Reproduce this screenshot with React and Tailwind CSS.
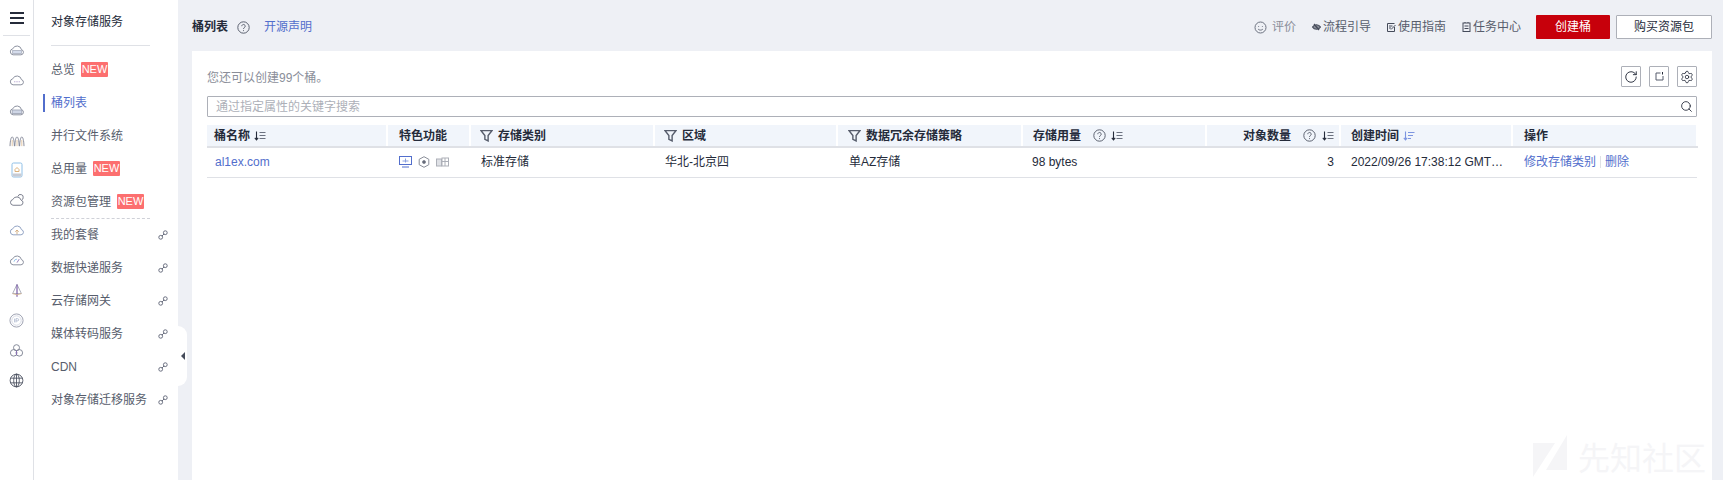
import { RotateCw, Settings, Search } from "lucide-react";

const Cloud = ({ children, stroke = "#7d8292" }) => (
  <svg width="16" height="14" viewBox="0 0 18 16" fill="none" stroke={stroke} strokeWidth="1">
    <path d="M4.5 13.5h9a3 3 0 0 0 .6-5.9A5.2 5.2 0 0 0 4.2 6.6 3.5 3.5 0 0 0 4.5 13.5z" />
    {children}
  </svg>
);

const railIcons = [
  <Cloud key="a"><rect x="4" y="8.5" width="10" height="3.5" fill="#d5dcec" stroke="#adb3c2" /></Cloud>,
  <Cloud key="b"><path d="M6 10h1M8.5 10h1M11 10h1" stroke="#8a6fb5" /></Cloud>,
  <Cloud key="c"><rect x="3.5" y="8" width="11" height="4" fill="#cfd6e6" stroke="#a0a6b6" /></Cloud>,
  <svg key="d" width="16" height="14" viewBox="0 0 18 16" fill="none" stroke="#7a7f90" strokeWidth="1">
    <path d="M1 15C1.5 1 5.5 1 6 15M6.5 15C7 1 11 1 11.5 15M12 15C12.5 1 16.5 1 17 15" />
    <path d="M3.5 15V8M9 15V8M14.5 15V8" stroke="#e0c09a" />
  </svg>,
  <svg key="e" width="12" height="16" viewBox="0 0 12 16" fill="none" strokeWidth="1">
    <rect x="1" y="1" width="10" height="14" rx="1.5" stroke="#8fc0e8" />
    <rect x="1.5" y="11.5" width="9" height="3" fill="#c8cbd4" />
    <path d="M4 7.5l2-2 2 2v2H4z" stroke="#dcb27c" />
  </svg>,
  <svg key="f" width="16" height="14" viewBox="0 0 18 16" fill="none" stroke="#6b7080" strokeWidth="1">
    <path d="M4.5 14h8.5a3 3 0 0 0 .6-5.9A5 5 0 0 0 4.2 7.5 3.3 3.3 0 0 0 4.5 14z" />
    <path d="M10 4a3 3 0 0 1 6 1.5 3 3 0 0 1-1.5 2.5" />
  </svg>,
  <Cloud key="g" stroke="#8497bb"><path d="M9 13V8M7 10l2-2 2 2" stroke="#d0a878" /></Cloud>,
  <Cloud key="h"><path d="M9 11l2.5-4" stroke="#8a6fb5" /><path d="M5.5 10a3.5 3.5 0 0 1 3.5-3" stroke="#8fc0e8" /></Cloud>,
  <svg key="i" width="14" height="15" viewBox="0 0 16 16" fill="none" stroke="#a0a4b2" strokeWidth="1">
    <path d="M8 1 3 11.5h10z" />
    <path d="M8 1v14" stroke="#7d5fa8" strokeWidth="1.4" />
    <path d="M3 11.5 8 13l5-1.5" stroke="#d8b690" />
  </svg>,
  <svg key="j" width="15" height="15" viewBox="0 0 16 16" fill="none" strokeWidth="1">
    <circle cx="8" cy="8" r="7" stroke="#9a9eae" />
    <circle cx="8" cy="8" r="5" stroke="#d4d8e2" />
    <path d="M6 6v4M7.5 10V6h1.6a1.2 1.2 0 0 1 0 2.4H7.5" stroke="#b4bed2" />
  </svg>,
  <svg key="k" width="15" height="15" viewBox="0 0 16 16" fill="none" stroke="#7d8292" strokeWidth="1">
    <circle cx="8" cy="5" r="3.2" />
    <circle cx="5" cy="10.5" r="3.5" />
    <circle cx="11" cy="10.5" r="3.5" />
    <path d="M8 8v5" stroke="#8a6fb5" />
  </svg>,
  <svg key="l" width="15" height="15" viewBox="0 0 16 16" fill="none" stroke="#454b5a" strokeWidth="0.9">
    <circle cx="8" cy="8" r="6.8" />
    <ellipse cx="8" cy="8" rx="3" ry="6.8" />
    <path d="M1.5 5.5h13M1.5 10.5h13M8 1v14" />
  </svg>,
];

const LinkIcon = () => (
  <svg width="10" height="10" viewBox="0 0 10 10" fill="none" stroke="#6b7080" strokeWidth="1">
    <circle cx="2.7" cy="7.3" r="1.9" />
    <circle cx="7.3" cy="2.7" r="1.9" />
    <path d="M4 6l2-2" />
  </svg>
);

const Help = ({ className = "" }) => (
  <svg width="13" height="13" viewBox="0 0 13 13" fill="none" stroke="#5c6270" strokeWidth="1" className={className}>
    <circle cx="6.5" cy="6.5" r="5.7" />
    <path d="M4.8 5.2a1.7 1.7 0 1 1 2.6 1.4c-.6.4-.9.7-.9 1.4" />
    <path d="M6.5 9.2v.9" />
  </svg>
);

const Filter = () => (
  <svg width="13" height="13" viewBox="0 0 12 12" fill="none" stroke="#575d6c" strokeWidth="1.3" className="mr-[5px] shrink-0">
    <path d="M1 1.5h10L7.5 6v5L4.5 9.5V6z" />
  </svg>
);

const Sort = ({ className = "" }) => (
  <svg width="12" height="10" viewBox="0 0 12 10" fill="none" strokeWidth="1.1" className={className}>
    <path d="M2.5 0.5v8M0.8 6.8l1.7 2 1.7-2" stroke="#252b3a" />
    <path d="M5.5 1.5h6M5.5 4.5h6M5.5 7.5h6" stroke="#6c7280" />
  </svg>
);

const SortActive = () => (
  <svg width="12" height="10" viewBox="0 0 12 10" fill="none" stroke="#7d95e0" strokeWidth="1.1" className="ml-[4px]">
    <path d="M2.5 0.5v8M0.8 6.8l1.7 2 1.7-2" />
    <path d="M5 1.5h6.5M5 4.5h5M5 7.5h3" />
  </svg>
);

const New = () => (
  <span className="ml-[6px] flex h-[15px] w-[27px] items-center justify-center rounded-[1px] bg-[#fc6f6f] text-[11px] leading-none text-white">NEW</span>
);

const SideItem = ({ label, isNew, link, active, dashed }) => (
  <div className="relative flex h-[33px] items-center pr-[10px]">
    {dashed && <div className="absolute left-[17px] top-0 w-[99px] border-t border-dashed border-[#cfd1d8]" />}
    {active ? (
      <span className="ml-[9px] h-[18px] border-l-2 border-[#526ecc] pl-[6px] leading-[18px] text-[#526ecc]">{label}</span>
    ) : (
      <span className="ml-[17px]">{label}</span>
    )}
    {isNew && <New />}
    {link && <span className="ml-auto flex"><LinkIcon /></span>}
  </div>
);

const TopLink = ({ icon, label, muted }) => (
  <div className={`flex items-center gap-[2px] ${muted ? "text-[#8a8e99]" : "text-[#575d6c]"}`}>
    {icon}
    <span>{label}</span>
  </div>
);

const Th = ({ children, className = "" }) => (
  <th className={`h-[22px] border-r-2 border-b-2 border-r-white border-b-[#dfe1e6] bg-[#f1f5fb] p-0 text-left font-bold text-[#252b3a] ${className}`}>
    <div className="flex items-center">{children}</div>
  </th>
);

const Td = ({ children, className = "" }) => (
  <td className={`h-[30px] border-b border-[#dfe1e6] p-0 text-[#252b3a] ${className}`}>{children}</td>
);

export default function App() {
  return (
    <div className="flex h-screen overflow-hidden bg-white font-['Liberation_Sans','Noto_Sans_CJK_SC',sans-serif] text-[12px] text-[#575d6c]">
      {/* icon rail */}
      <div className="flex w-[34px] shrink-0 flex-col border-r border-[#dfe1e6]">
        <div className="mx-[3px] flex h-[36px] items-center justify-center border-b border-[#dfe1e6]">
          <div className="flex w-[14px] flex-col gap-[3px]">
            <div className="h-[2px] bg-[#252b3a]" />
            <div className="h-[2px] bg-[#252b3a]" />
            <div className="h-[2px] bg-[#252b3a]" />
          </div>
        </div>
        <div className="-mt-px">
          {railIcons.map((icon, i) => (
            <div key={i} className="flex h-[30px] items-center justify-center">{icon}</div>
          ))}
        </div>
      </div>

      {/* service menu */}
      <div className="w-[144px] shrink-0">
        <div className="mx-[17px] mr-[28px] flex h-[46px] items-center border-b border-[#dfe1e6] pb-[1px] text-[#252b3a]">对象存储服务</div>
        <div className="mt-[7px]">
          <SideItem label="总览" isNew />
          <SideItem label="桶列表" active />
          <SideItem label="并行文件系统" />
          <SideItem label="总用量" isNew />
          <SideItem label="资源包管理" isNew />
          <SideItem label="我的套餐" link dashed />
          <SideItem label="数据快递服务" link />
          <SideItem label="云存储网关" link />
          <SideItem label="媒体转码服务" link />
          <SideItem label="CDN" link />
          <SideItem label="对象存储迁移服务" link />
        </div>
      </div>

      {/* main */}
      <div className="relative flex min-w-0 flex-1 flex-col bg-[#eef0f5] pl-[14px] pr-[11px]">
        <div className="absolute left-0 top-[326px] flex h-[60px] w-[9px] items-center justify-center rounded-r-xl bg-white">
          <div className="h-0 w-0 border-y-[4px] border-r-[4px] border-y-transparent border-r-[#454b5a]" />
        </div>

        <div className="flex h-[51px] shrink-0 items-center pt-[3px]">
          <span className="font-bold text-[#252b3a]">桶列表</span>
          <Help className="ml-[9px]" />
          <span className="ml-[14px] text-[#526ecc]">开源声明</span>
          <div className="ml-auto flex items-center">
            <div className="flex items-center gap-[16px]">
              <TopLink
                muted
                icon={
                  <svg width="13" height="13" viewBox="0 0 13 13" fill="none" stroke="#6c7280" strokeWidth="1" className="mr-[3px]">
                    <circle cx="6.5" cy="6.5" r="5.5" />
                    <path d="M4.6 5v.8M8.4 5v.8M4.2 8.2c1.2 1.2 3.4 1.2 4.6 0" />
                  </svg>
                }
                label="评价"
              />
              <TopLink
                icon={
                  <svg width="9" height="8" viewBox="0 0 9 8" fill="none" stroke="#454b5a" strokeWidth="1.2">
                    <path d="M0.5 4C2.5 1 6.5 1 8.5 4 6.5 7 2.5 7 0.5 4z" fill="#8a8e99" />
                    <path d="M2 1l5 6" />
                  </svg>
                }
                label="流程引导"
              />
              <TopLink
                icon={
                  <svg width="9" height="9" viewBox="0 0 9 9" fill="none" stroke="#454b5a" strokeWidth="1">
                    <path d="M7.5 4v4.5h-7v-8h7" />
                    <path d="M2 3h3.5M2 5h2M4 6.5 8.5 2" />
                  </svg>
                }
                label="使用指南"
              />
              <TopLink
                icon={
                  <svg width="9" height="10" viewBox="0 0 9 10" fill="none" stroke="#454b5a" strokeWidth="1">
                    <rect x="1" y="1" width="7" height="8.5" />
                    <path d="M3 1V0M6 1V0M2.5 4h4M2.5 6.5h4" />
                  </svg>
                }
                label="任务中心"
              />
            </div>
            <button className="ml-[15px] h-[24px] w-[74px] rounded-[1px] bg-[#c7000b] text-white">创建桶</button>
            <button className="ml-[6px] h-[24px] w-[96px] rounded-[1px] border border-[#adb0b8] bg-white text-[#252b3a]">购买资源包</button>
          </div>
        </div>

        <div className="relative min-h-0 flex-1 bg-white px-[15px] pt-[15px]">
          <div className="flex h-[21px] items-center justify-between">
            <span className="pt-[2px] text-[#8a8e99]">您还可以创建99个桶。</span>
            <div className="flex gap-[8px]">
              <button className="flex h-[21px] w-[20px] items-center justify-center rounded-[1px] border border-[#adb0b8]">
                <RotateCw size={14} strokeWidth={1.6} className="text-[#252b3a]" />
              </button>
              <button className="flex h-[21px] w-[20px] items-center justify-center rounded-[1px] border border-[#adb0b8]">
                <svg width="9" height="9" viewBox="0 0 9 9" fill="none" stroke="#575d6c" strokeWidth="1">
                  <path d="M5.5 1H1v7h7V4" />
                  <path d="M7.5 0v2.5" stroke="#252b3a" />
                </svg>
              </button>
              <button className="flex h-[21px] w-[20px] items-center justify-center rounded-[1px] border border-[#adb0b8]">
                <Settings size={14} strokeWidth={1.4} className="text-[#252b3a]" />
              </button>
            </div>
          </div>

          <div className="mt-[9px] flex h-[21px] items-center rounded-[1px] border border-[#adb0b8] pl-[8px] pr-[3px]">
            <span className="text-[#adb0b8]">通过指定属性的关键字搜索</span>
            <Search size={13} strokeWidth={1.6} className="ml-auto text-[#252b3a]" />
          </div>

          <table className="mt-[8px] w-[1490px] table-fixed border-collapse">
            <colgroup>
              <col className="w-[180px]" />
              <col className="w-[83px]" />
              <col className="w-[184px]" />
              <col className="w-[183px]" />
              <col className="w-[185px]" />
              <col className="w-[184px]" />
              <col className="w-[134px]" />
              <col className="w-[172px]" />
              <col className="w-[185px]" />
            </colgroup>
            <thead>
              <tr>
                <Th className="pl-[7px]">桶名称<Sort className="ml-[4px]" /></Th>
                <Th className="pl-[11px]">特色功能</Th>
                <Th className="pl-[9px]"><Filter />存储类别</Th>
                <Th className="pl-[9px]"><Filter />区域</Th>
                <Th className="pl-[10px]"><Filter />数据冗余存储策略</Th>
                <Th className="pl-[10px]">存储用量<Help className="ml-[12px]" /><Sort className="ml-[5px]" /></Th>
                <Th className="pl-[36px]">对象数量<Help className="ml-[12px]" /><Sort className="ml-[6px]" /></Th>
                <Th className="pl-[10px]">创建时间<SortActive /></Th>
                <Th className="pl-[11px]">操作</Th>
              </tr>
            </thead>
            <tbody>
              <tr>
                <Td className="pl-[8px] text-[#526ecc]!">al1ex.com</Td>
                <Td className="pl-[12px]">
                  <div className="flex items-center gap-[6px]">
                    <svg width="13" height="12" viewBox="0 0 13 12" fill="none" stroke="#526ecc" strokeWidth="1">
                      <rect x="0.5" y="0.5" width="12" height="8" />
                      <path d="M3 11h7" />
                      <path d="M3.5 5h6M6.5 2.5v4" stroke="#8aa0e0" />
                    </svg>
                    <svg width="12" height="12" viewBox="0 0 12 12" fill="none" stroke="#8a8e99" strokeWidth="1">
                      <path d="M6 .7 10.8 3.3v5.4L6 11.3 1.2 8.7V3.3z" />
                      <circle cx="6" cy="6" r="1.5" fill="#575d6c" />
                    </svg>
                    <svg width="13" height="11" viewBox="0 0 13 11" fill="none" stroke="#adb0b8" strokeWidth="1">
                      <rect x="0.5" y="2" width="5" height="7" fill="#dfe1e6" />
                      <rect x="6" y="1" width="6.5" height="8" />
                      <path d="M6 4.5h6.5M9 1v8" />
                    </svg>
                  </div>
                </Td>
                <Td className="pl-[11px]">标准存储</Td>
                <Td className="pl-[11px]">华北-北京四</Td>
                <Td className="pl-[12px]">单AZ存储</Td>
                <Td className="pl-[10px]">98 bytes</Td>
                <Td className="pr-[6px] text-right">3</Td>
                <Td className="truncate pl-[11px] pr-[8px]">2022/09/26 17:38:12 GMT+08:00</Td>
                <Td className="pl-[12px]">
                  <div className="flex items-center text-[#526ecc]">
                    <span>修改存储类别</span>
                    <span className="mx-[4px] h-[12px] border-l border-[#dfe1e6]" />
                    <span>删除</span>
                  </div>
                </Td>
              </tr>
            </tbody>
          </table>

          {/* watermark */}
          <div className="pointer-events-none absolute left-[1341px] top-[384px] flex items-start text-[#f5f5f7]">
            <svg width="35" height="42" viewBox="0 0 35 42" fill="#f5f5f7">
              <path d="M0 8h22L0 42z" />
              <path d="M34 0v35H13z" />
            </svg>
            <span className="ml-[10px] mt-[2px] text-[32px] leading-[44px]">先知社区</span>
          </div>
        </div>
      </div>
    </div>
  );
}
